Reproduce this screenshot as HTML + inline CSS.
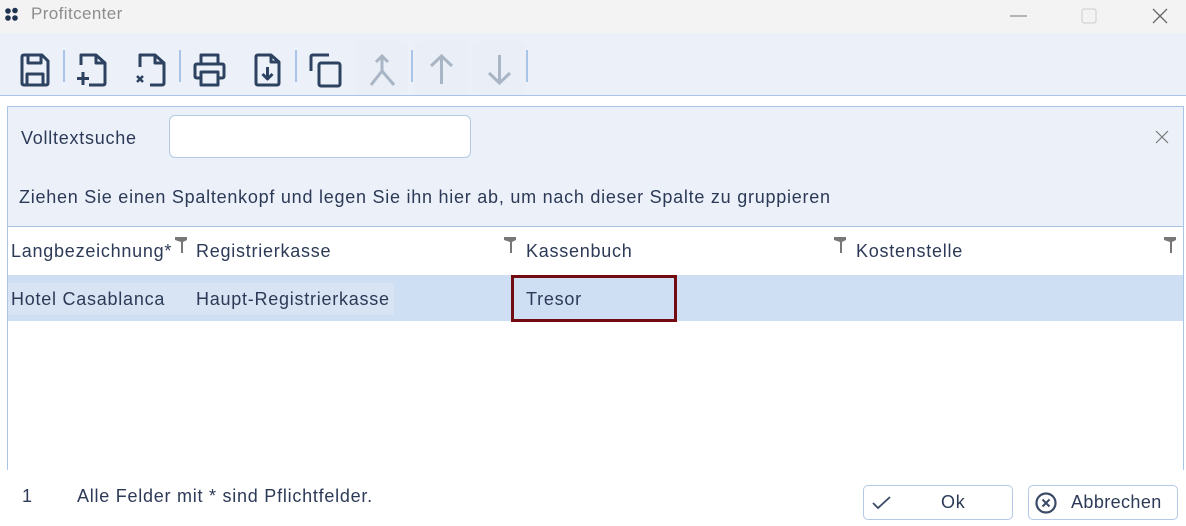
<!DOCTYPE html>
<html><head><meta charset="utf-8"><style>
*{box-sizing:border-box;margin:0;padding:0}
body{width:1186px;height:526px;overflow:hidden;background:#fff;font-family:"Liberation Sans",sans-serif;color:#2c3a57;position:relative}
.abs{position:absolute}
.t{font-size:18px;letter-spacing:0.75px;white-space:nowrap}
svg{position:absolute;overflow:visible}
.sep{position:absolute;top:50px;width:2px;height:32px;background:#a9c4e6}
</style></head><body>
<div class="abs" style="left:0;top:0;width:1186px;height:33px;background:#f3f3f3"></div>
<svg style="left:4px;top:7px" width="16" height="16"><circle cx="4" cy="4" r="2.8" fill="#1d3350"/><circle cx="11" cy="3.5" r="2.8" fill="#1d3350"/><circle cx="4" cy="11" r="2.8" fill="#1d3350"/><circle cx="11" cy="11" r="2.8" fill="#1d3350"/></svg>
<div class="abs t" style="left:31px;top:4px;color:#8d8d8d;font-size:17px;letter-spacing:0.4px">Profitcenter</div>
<svg style="left:1010px;top:15px" width="20" height="2"><line x1="0" y1="1" x2="17" y2="1" stroke="#777" stroke-width="1"/></svg>
<svg style="left:1081px;top:8px" width="16" height="16"><rect x="1" y="1" width="14" height="14" rx="2" fill="none" stroke="#ccc"/></svg>
<svg style="left:1152px;top:8px" width="16" height="16"><path d="M1 1L15 15M15 1L1 15" stroke="#666" stroke-width="1.3"/></svg>
<div class="abs" style="left:0;top:33px;width:1186px;height:63px;background:#ecf1f9;border-bottom:1px solid #a9c4e6"></div>
<div class="abs" style="left:356px;top:41px;width:52px;height:54px;background:#eaeff7;border-radius:6px"></div>
<div class="abs" style="left:414px;top:41px;width:54px;height:54px;background:#eaeff7;border-radius:6px"></div>
<div class="abs" style="left:472px;top:41px;width:54px;height:54px;background:#eaeff7;border-radius:6px"></div>
<svg style="left:20px;top:53px" width="30" height="35" fill="none" stroke="#2c4260" stroke-width="3" stroke-linejoin="round">
<path d="M2 4q0-2 2-2h18l6 6v22q0 2-2 2H4q-2 0-2-2z"/><path d="M8 2v8h13V2"/><path d="M7 32V21h16v11"/></svg>
<div class="sep" style="left:63px"></div>
<svg style="left:77px;top:53px" width="30" height="35" fill="none" stroke="#2c4260" stroke-width="3" stroke-linejoin="round">
<path d="M4 12V2h15l9 8v20q0 2-2 2H12"/><path d="M19 2v8h9"/><path d="M6 19v13M0 25.5h12"/></svg>
<svg style="left:136px;top:53px" width="30" height="35" fill="none" stroke="#2c4260" stroke-width="3" stroke-linejoin="round">
<path d="M4 14V2h15l9 8v20q0 2-2 2H14"/><path d="M19 2v8h9"/><path d="M1 23l6 6M7 23l-6 6" stroke-width="2.5"/></svg>
<div class="sep" style="left:179px"></div>
<svg style="left:193px;top:53px" width="34" height="35" fill="none" stroke="#2c4260" stroke-width="3" stroke-linejoin="round">
<path d="M8 11V2h17v9"/><path d="M8 25H4q-2 0-2-2V13q0-2 2-2h25q2 0 2 2v10q0 2-2 2h-4"/><path d="M8 19h17v13H8z"/></svg>
<svg style="left:254px;top:53px" width="28" height="35" fill="none" stroke="#2c4260" stroke-width="3" stroke-linejoin="round">
<path d="M2 4q0-2 2-2h13l8 7v21q0 2-2 2H4q-2 0-2-2z"/><path d="M17 2v7h8"/><path d="M13.5 14v12M8.5 21l5 5 5-5"/></svg>
<div class="sep" style="left:295px"></div>
<svg style="left:309px;top:53px" width="33" height="35" fill="none" stroke="#2c4260" stroke-width="3" stroke-linejoin="round">
<path d="M2 18V4q0-2 2-2h16"/><rect x="10" y="10" width="21" height="23" rx="2"/></svg>
<svg style="left:368px;top:53px" width="30" height="35" fill="none" stroke="#a9b5c4" stroke-width="3">
<path d="M8 9l6-6 6 6M14 3v15L3 32M14 18l12 14"/></svg>
<div class="sep" style="left:411px"></div>
<svg style="left:428px;top:53px" width="27" height="35" fill="none" stroke="#a9b5c4" stroke-width="3"><path d="M13.5 31V3M3 13L13.5 3 24 13"/></svg>
<svg style="left:486px;top:53px" width="27" height="35" fill="none" stroke="#a9b5c4" stroke-width="3"><path d="M13.5 2v28M3 20l10.5 10L24 20"/></svg>
<div class="sep" style="left:526px"></div>

<div class="abs" style="left:7px;top:106px;width:1177px;height:121px;background:#ecf1f9;border:1px solid #a9c4e6"></div>
<div class="abs t" style="left:21px;top:128px">Volltextsuche</div>
<div class="abs" style="left:169px;top:115px;width:302px;height:43px;background:#fff;border:1px solid #b3c9e6;border-radius:6px"></div>
<svg style="left:1156px;top:131px" width="12" height="12"><path d="M0 0L12 12M12 0L0 12" stroke="#777" stroke-width="1.2"/></svg>
<div class="abs t" style="left:19px;top:187px">Ziehen Sie einen Spaltenkopf und legen Sie ihn hier ab, um nach dieser Spalte zu gruppieren</div>

<div class="abs" style="left:7px;top:227px;width:1177px;height:243px;border-left:1px solid #a9c4e6;border-right:1px solid #a9c4e6"></div>
<div class="abs t" style="left:11px;top:241px">Langbezeichnung*</div>
<div class="abs t" style="left:196px;top:241px">Registrierkasse</div>
<div class="abs t" style="left:526px;top:241px">Kassenbuch</div>
<div class="abs t" style="left:856px;top:241px">Kostenstelle</div>
<svg style="left:175px;top:237px" width="12" height="16"><path d="M0 0h12v3L8 5v11H6V5L0 3z" fill="#777"/></svg>
<svg style="left:504px;top:237px" width="12" height="16"><path d="M0 0h12v3L8 5v11H6V5L0 3z" fill="#777"/></svg>
<svg style="left:834px;top:237px" width="12" height="16"><path d="M0 0h12v3L8 5v11H6V5L0 3z" fill="#777"/></svg>
<svg style="left:1164px;top:237px" width="12" height="16"><path d="M0 0h12v3L8 5v11H6V5L0 3z" fill="#777"/></svg>
<div class="abs" style="left:8px;top:275px;width:1175px;height:46px;background:#cfdff3"></div>
<div class="abs" style="left:8px;top:283px;width:386px;height:32px;background:#d8e4f3"></div>
<div class="abs t" style="left:11px;top:289px">Hotel Casablanca</div>
<div class="abs t" style="left:196px;top:289px">Haupt-Registrierkasse</div>
<div class="abs" style="left:511px;top:275px;width:166px;height:47px;border:3px solid #720c10"></div>
<div class="abs t" style="left:526px;top:289px">Tresor</div>

<div class="abs t" style="left:22px;top:486px">1</div>
<div class="abs t" style="left:77px;top:486px">Alle Felder mit * sind Pflichtfelder.</div>
<div class="abs" style="left:863px;top:485px;width:150px;height:35px;border:1px solid #b3c9e6;border-radius:5px"></div>
<svg style="left:872px;top:496px" width="20" height="14"><path d="M1 7l5 5L18 1" fill="none" stroke="#3b4b66" stroke-width="1.8"/></svg>
<div class="abs t" style="left:941px;top:492px">Ok</div>
<div class="abs" style="left:1028px;top:485px;width:150px;height:35px;border:1px solid #b3c9e6;border-radius:5px"></div>
<svg style="left:1034px;top:491px" width="24" height="24"><circle cx="12" cy="12" r="9.5" fill="none" stroke="#3b4b66" stroke-width="2.2"/><path d="M8.5 8.5l7 7M15.5 8.5l-7 7" stroke="#3b4b66" stroke-width="2"/></svg>
<div class="abs t" style="left:1071px;top:492px;letter-spacing:0.4px">Abbrechen</div>
</body></html>
